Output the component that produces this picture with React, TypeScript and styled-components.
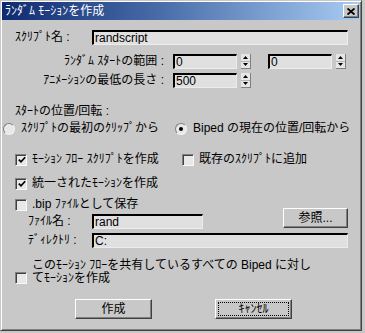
import React from "react";
import styled, { createGlobalStyle } from "styled-components";

const GlobalStyle = createGlobalStyle`
  html, body {
    margin: 0;
    padding: 0;
    background: #c8c8c8;
  }
  body {
    font-family: "Liberation Sans", "Noto Sans CJK JP", sans-serif;
    font-size: 12px;
    color: #000;
  }
  * {
    box-sizing: border-box;
  }
`;

export default function App() {
  return (
    <>
      <GlobalStyle />
      <Window>
        <TitleBar>
          <Title>ﾗﾝﾀﾞﾑ ﾓｰｼｮﾝを作成</Title>
          <CloseButton>
            <svg width="8" height="7" viewBox="0 0 8 7">
              <path d="M0.5 0.5 L7.5 6.5 M7.5 0.5 L0.5 6.5" stroke="#000" strokeWidth="1.8" />
            </svg>
          </CloseButton>
        </TitleBar>

        <Content>
          <NameRow>
            <NameLabel>ｽｸﾘﾌﾟﾄ名 :</NameLabel>
            <Field $grow>randscript</Field>
          </NameRow>

          <SpinRow $top={9}>
            <SpinLabel>ﾗﾝﾀﾞﾑ ｽﾀｰﾄの範囲 :</SpinLabel>
            <Field $width={64}>0</Field>
            <Spinner />
            <Field $width={64} style={{ marginLeft: 17 }}>0</Field>
            <Spinner />
          </SpinRow>

          <SpinRow $top={4}>
            <SpinLabel>ｱﾆﾒｰｼｮﾝの最低の長さ :</SpinLabel>
            <Field $width={64}>500</Field>
            <Spinner />
          </SpinRow>

          <SectionLabel>ｽﾀｰﾄの位置/回転 :</SectionLabel>

          <RadioRow>
            <Option>
              <Radio />
              <span>ｽｸﾘﾌﾟﾄの最初のｸﾘｯﾌﾟから</span>
            </Option>
            <Option>
              <Radio $checked />
              <span>Biped の現在の位置/回転から</span>
            </Option>
          </RadioRow>

          <CheckRow $top={18}>
            <CheckOption $width={167}>
              <Check checked />
              <span>ﾓｰｼｮﾝ ﾌﾛｰ ｽｸﾘﾌﾟﾄを作成</span>
            </CheckOption>
            <CheckOption>
              <Check />
              <span>既存のｽｸﾘﾌﾟﾄに追加</span>
            </CheckOption>
          </CheckRow>

          <CheckRow $top={11}>
            <CheckOption>
              <Check checked />
              <span>統一されたﾓｰｼｮﾝを作成</span>
            </CheckOption>
          </CheckRow>

          <FileGrid>
            <CheckOption>
              <Check />
              <span>.bip ﾌｧｲﾙとして保存</span>
            </CheckOption>
            <BrowseButton>参照...</BrowseButton>
            <FileRow>
              <FileLabel>ﾌｧｲﾙ名 :</FileLabel>
              <Field $width={111}>rand</Field>
            </FileRow>
          </FileGrid>

          <FileRow $top={4}>
            <FileLabel>ﾃﾞｨﾚｸﾄﾘ :</FileLabel>
            <Field $grow>C:</Field>
          </FileRow>

          <MultiCheck>
            <Check />
            <span>
              このﾓｰｼｮﾝ ﾌﾛｰを共有しているすべての Biped に対し
              <br />
              てﾓｰｼｮﾝを作成
            </span>
          </MultiCheck>

          <ButtonRow>
            <PushButton>作成</PushButton>
            <PushButton $focused>ｷｬﾝｾﾙ</PushButton>
          </ButtonRow>
        </Content>
      </Window>
    </>
  );
}

function Check({ checked }: { checked?: boolean }) {
  return (
    <CheckBox>
      {checked && (
        <svg width="8" height="8" viewBox="0 0 8 8">
          <polyline points="0.8,3.6 3,5.8 7.2,1.2" fill="none" stroke="#000" strokeWidth="1.7" />
        </svg>
      )}
    </CheckBox>
  );
}

function Spinner() {
  return (
    <SpinBox>
      <SpinHalf>
        <svg width="5" height="3" viewBox="0 0 5 3">
          <polygon points="2.5,0 5,3 0,3" fill="#000" />
        </svg>
      </SpinHalf>
      <SpinHalf>
        <svg width="5" height="3" viewBox="0 0 5 3">
          <polygon points="0,0 5,0 2.5,3" fill="#000" />
        </svg>
      </SpinHalf>
    </SpinBox>
  );
}

const Window = styled.div`
  width: 362px;
  height: 331px;
  background: #c8c8c8;
  border: 1px solid;
  border-color: #c8c8c8 #404040 #404040 #c8c8c8;
  box-shadow: inset 1px 1px #ffffff, inset -1px -1px #808080;
  padding: 1px;
  display: flex;
  flex-direction: column;
`;

const TitleBar = styled.div`
  height: 18px;
  display: flex;
  align-items: center;
  justify-content: space-between;
  padding: 0 1px 0 3px;
  background: linear-gradient(90deg, #0e2a70 0%, #4a6eaa 45%, #a8ccf2 100%);
`;

const Title = styled.div`
  color: #fff;
  font-size: 12px;
  line-height: 13px;
  white-space: nowrap;
`;

const CloseButton = styled.div`
  width: 16px;
  height: 14px;
  background: #c8c8c8;
  border: 1px solid;
  border-color: #fff #404040 #404040 #fff;
  box-shadow: inset -1px -1px #808080;
  display: flex;
  align-items: center;
  justify-content: center;
`;

const Content = styled.div`
  flex: 1;
  display: flex;
  flex-direction: column;
  padding: 10px 12px 0 13px;
  line-height: 13px;
  white-space: nowrap;
`;

const Field = styled.div<{ $width?: number; $grow?: boolean }>`
  height: 15px;
  width: ${(p) => (p.$width ? `${p.$width}px` : "auto")};
  flex: ${(p) => (p.$grow ? "1" : "none")};
  background: #e0e0e0;
  border-top: 2px solid #000;
  border-left: 2px solid #000;
  border-right: 1px solid #ececec;
  border-bottom: 1px solid #ececec;
  padding: 0 0 0 1px;
  font-size: 12px;
  line-height: 12px;
  overflow: hidden;
`;

const NameRow = styled.div`
  display: flex;
  align-items: center;
`;

const NameLabel = styled.div`
  width: 77px;
`;

const SpinRow = styled.div<{ $top: number }>`
  display: flex;
  align-items: center;
  margin-top: ${(p) => p.$top}px;
`;

const SpinLabel = styled.div`
  width: 153px;
  padding-right: 4px;
  text-align: right;
  margin-right: 5px;
`;

const SpinBox = styled.div`
  width: 10px;
  height: 15px;
  margin-left: 4px;
  display: flex;
  flex-direction: column;
  background: #e6e6e6;
  border-right: 1px solid #808080;
  border-bottom: 1px solid #808080;
`;

const SpinHalf = styled.div`
  flex: 1;
  display: flex;
  align-items: center;
  justify-content: center;
  & + & {
    border-top: 1px solid #b4b4b4;
  }
`;

const SectionLabel = styled.div`
  margin-top: 17px;
`;

const RadioRow = styled.div`
  display: grid;
  grid-template-columns: 172px auto;
  margin: 4px 0 0 -12px;
`;

const Option = styled.label`
  display: flex;
  align-items: center;
  gap: 6px;
`;

const Radio = styled.span<{ $checked?: boolean }>`
  width: 12px;
  height: 12px;
  border-radius: 50%;
  background: #e8e8e8;
  border: 1px solid;
  border-color: #808080 #f4f4f4 #f4f4f4 #808080;
  display: flex;
  align-items: center;
  justify-content: center;
  &::after {
    content: "";
    width: 4px;
    height: 4px;
    border-radius: 50%;
    background: ${(p) => (p.$checked ? "#000" : "transparent")};
  }
`;

const CheckRow = styled.div<{ $top: number }>`
  display: flex;
  margin-top: ${(p) => p.$top}px;
`;

const CheckOption = styled.label<{ $width?: number }>`
  display: flex;
  align-items: center;
  gap: 5px;
  width: ${(p) => (p.$width ? `${p.$width}px` : "auto")};
`;

const CheckBox = styled.span`
  width: 12px;
  height: 12px;
  flex: none;
  background: #e8e8e8;
  border: 1px solid;
  border-color: #808080 #f8f8f8 #f8f8f8 #808080;
  box-shadow: inset 1px 1px #404040;
  display: flex;
  align-items: center;
  justify-content: center;
  padding: 1px 0 0 1px;
`;

const FileGrid = styled.div`
  display: grid;
  grid-template-columns: 1fr 65px;
  grid-template-rows: 13px 15px;
  row-gap: 3px;
  margin-top: 8px;
  & > :nth-child(2) {
    grid-row: 1 / span 2;
    grid-column: 2;
    align-self: end;
    margin-bottom: 1px;
  }
  & > :nth-child(3) {
    grid-column: 1;
    grid-row: 2;
  }
`;

const FileRow = styled.div<{ $top?: number }>`
  display: flex;
  align-items: center;
  margin-top: ${(p) => p.$top ?? 0}px;
`;

const FileLabel = styled.div`
  width: 77px;
  padding-left: 13px;
`;

const MultiCheck = styled.label`
  display: flex;
  align-items: flex-end;
  gap: 5px;
  margin-top: 11px;
  & > span:last-child {
    line-height: 13px;
  }
  & > span:first-child {
    margin-bottom: 1px;
  }
`;

const PushButton = styled.div<{ $focused?: boolean }>`
  width: 77px;
  height: 20px;
  background: #c8c8c8;
  border: 1px solid;
  border-color: #fff #404040 #404040 #fff;
  box-shadow: inset -1px -1px #808080;
  display: flex;
  align-items: center;
  justify-content: center;
  outline: ${(p) => (p.$focused ? "1px dotted #000" : "none")};
  outline-offset: -4px;
`;

const BrowseButton = styled(PushButton)`
  width: 65px;
`;

const ButtonRow = styled.div`
  display: flex;
  gap: 63px;
  padding-left: 60px;
  margin-top: 14px;
`;
